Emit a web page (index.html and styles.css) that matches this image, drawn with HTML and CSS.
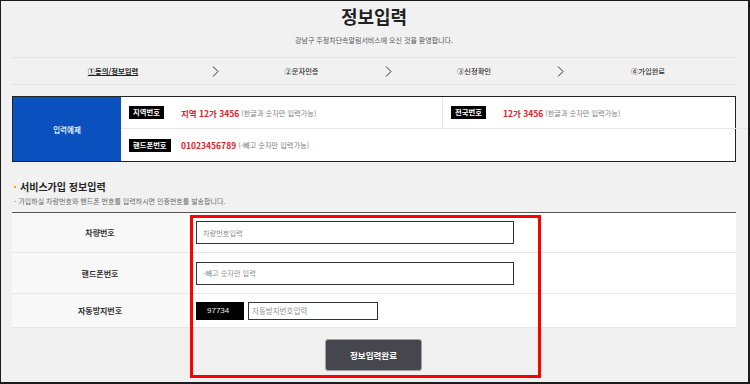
FILE: index.html
```html
<!DOCTYPE html>
<html lang="ko">
<head>
    <meta charset="UTF-8">
    <title>정보입력</title>
    <link rel="stylesheet" href="styles.css">
</head>
<body>
    <div class="frame">
        <div class="page">
            <h1 class="title">정보입력</h1>
            <p class="subtitle">강남구 주정차단속알림서비스에 오신 것을 환영합니다.</p>

            <div class="steps">
                <div class="step active">①동의/정보입력</div>
                <div class="chev"><svg width="7" height="11" viewBox="0 0 7 11"><polyline points="1,0.5 6,5.5 1,10.5" fill="none" stroke="#333" stroke-width="1"/></svg></div>
                <div class="step">②문자인증</div>
                <div class="chev"><svg width="7" height="11" viewBox="0 0 7 11"><polyline points="1,0.5 6,5.5 1,10.5" fill="none" stroke="#333" stroke-width="1"/></svg></div>
                <div class="step">③신청확인</div>
                <div class="chev"><svg width="7" height="11" viewBox="0 0 7 11"><polyline points="1,0.5 6,5.5 1,10.5" fill="none" stroke="#333" stroke-width="1"/></svg></div>
                <div class="step">④가입완료</div>
            </div>

            <div class="example">
                <div class="example-head">입력예제</div>
                <div class="example-body">
                    <div class="example-row split">
                        <div class="example-cell">
                            <span class="badge-wrap"><span class="badge">지역번호</span></span>
                            <span class="red">지역 12가 3456</span>
                            <span class="hint">(한글과 숫자만 입력가능)</span>
                        </div>
                        <div class="example-cell right">
                            <span class="badge-wrap"><span class="badge">전국번호</span></span>
                            <span class="red">12가 3456</span>
                            <span class="hint">(한글과 숫자만 입력가능)</span>
                        </div>
                    </div>
                    <div class="example-row">
                        <div class="example-cell">
                            <span class="badge-wrap"><span class="badge">핸드폰번호</span></span>
                            <span class="red">01023456789</span>
                            <span class="hint">(-빼고 숫자만 입력가능)</span>
                        </div>
                    </div>
                </div>
            </div>

            <h2 class="section-title"><span class="dot"></span>서비스가입 정보입력</h2>
            <p class="note">- 가입하실 차량번호와 핸드폰 번호를 입력하시면 인증번호를 발송합니다.</p>

            <div class="form">
                <div class="form-row r1">
                    <div class="form-label">차량번호</div>
                    <div class="form-value"><input type="text" class="field" placeholder="차량번호입력"></div>
                </div>
                <div class="form-row r2">
                    <div class="form-label">핸드폰번호</div>
                    <div class="form-value"><input type="text" class="field" placeholder="-빼고 숫자만 입력"></div>
                </div>
                <div class="form-row r3">
                    <div class="form-label">자동방지번호</div>
                    <div class="form-value">
                        <span class="captcha">97734</span>
                        <input type="text" class="field small" placeholder="자동방지번호입력">
                    </div>
                </div>
            </div>

            <div class="actions">
                <button class="submit-btn">정보입력완료</button>
            </div>
        </div>
        <div class="highlight"></div>
    </div>
</body>
</html>
```

FILE: styles.css
```css
* {
    box-sizing: border-box;
}
html, body {
    margin: 0;
    padding: 0;
}
body {
    font-family: "Noto Sans CJK KR", "Noto Sans", sans-serif;
    color: #333;
    background: #f1f1f1;
}
.frame {
    position: relative;
    width: 750px;
    height: 384px;
    background: #f1f1f1;
    border-style: solid;
    border-color: #1c1c1c;
    border-width: 1px 2px 2px 1px;
    overflow: hidden;
}
.page {
    padding: 4px 12px 0 11px;
}
.title {
    margin: 0;
    font-size: 18px;
    line-height: 22px;
    font-weight: bold;
    text-align: center;
    color: #222;
}
.subtitle {
    margin: 8px 0 0;
    font-size: 7px;
    line-height: 10px;
    text-align: center;
    color: #555;
}
.steps {
    margin-top: 12px;
    height: 28px;
    border-top: 1px solid #e3e3e3;
    border-bottom: 1px solid #e3e3e3;
    display: grid;
    grid-template-columns: 184px 20px 153px 20px 152px 20px 156px;
    padding-left: 9px;
    align-items: center;
}
.step {
    text-align: center;
    font-size: 7.3px;
    line-height: 10px;
    font-weight: 500;
    color: #333;
}
.step.active {
    font-weight: bold;
    color: #222;
    text-decoration: underline;
}
.chev {
    display: flex;
    justify-content: center;
}
.chev svg {
    display: block;
}
.example {
    margin-top: 11px;
    height: 66px;
    border: 1px solid #222;
    background: #fff;
    display: grid;
    grid-template-columns: 108px 1fr;
}
.example-head {
    background: #0b50bf;
    color: #fff;
    font-size: 7.5px;
    font-weight: 500;
    display: flex;
    align-items: center;
    justify-content: center;
}
.example-body {
    display: flex;
    flex-direction: column;
}
.example-row {
    height: 32px;
    display: flex;
}
.example-row.split {
    border-bottom: 1px solid #e6e6e6;
}
.example-row.split .example-cell {
    width: 321px;
}
.example-row.split .example-cell.right {
    flex: 1;
    border-left: 1px solid #e6e6e6;
}
.example-cell {
    display: flex;
    align-items: center;
    padding-left: 8px;
    white-space: nowrap;
}
.badge-wrap {
    width: 52px;
    display: flex;
}
.badge {
    background: #000;
    color: #fff;
    font-size: 7.3px;
    font-weight: bold;
    line-height: 13px;
    height: 13px;
    padding: 0 4px;
}
.red {
    color: #d8262b;
    font-size: 8.5px;
    font-weight: bold;
}
.hint {
    margin-left: 2px;
    color: #808080;
    font-size: 7.2px;
}
.section-title {
    margin: 18px 0 0;
    font-size: 10px;
    line-height: 14px;
    font-weight: 600;
    color: #222;
    display: flex;
    align-items: center;
    padding-left: 2px;
}
.dot {
    width: 2px;
    height: 2px;
    background: #f5a300;
    margin-right: 4px;
}
.note {
    margin: 2px 0 0;
    padding-left: 2px;
    font-size: 7px;
    line-height: 10px;
    color: #6a6a6a;
}
.form {
    margin-top: 6px;
    border-top: 1px solid #555;
}
.form-row {
    display: grid;
    grid-template-columns: 176px 1fr;
    border-bottom: 1px solid #e7e7e7;
}
.form-row.r1 {
    height: 40px;
}
.form-row.r2 {
    height: 41px;
}
.form-row.r3 {
    height: 34px;
}
.form-label {
    background: #f8f8f8;
    display: flex;
    align-items: center;
    justify-content: center;
    font-size: 8px;
    font-weight: bold;
    color: #333;
}
.form-value {
    background: #fff;
    display: flex;
    align-items: center;
    padding-left: 8px;
    gap: 4px;
}
.field {
    width: 318px;
    height: 23px;
    border: 1px solid #333;
    padding: 0 6px;
    font-family: inherit;
    font-size: 7.2px;
    background: #fff;
    outline: none;
}
.field::placeholder {
    color: #8f8f8f;
}
.field.small {
    width: 130px;
    height: 18px;
    padding: 0 3px;
    font-size: 7.5px;
}
.captcha {
    width: 48px;
    height: 18px;
    background: #000;
    color: #eee;
    font-family: "Liberation Sans", sans-serif;
    font-size: 8px;
    display: flex;
    align-items: center;
    padding-left: 11px;
}
.actions {
    margin-top: 11px;
    display: flex;
    justify-content: center;
    padding-right: 1px;
}
.submit-btn {
    width: 97px;
    height: 32px;
    background: #46464f;
    border: 1px solid #a0a0a6;
    border-radius: 3px;
    color: #fff;
    font-family: inherit;
    font-size: 8.5px;
    font-weight: bold;
}
.highlight {
    position: absolute;
    left: 189px;
    top: 214px;
    width: 351px;
    height: 163px;
    border: 3px solid #ff0000;
}
```
